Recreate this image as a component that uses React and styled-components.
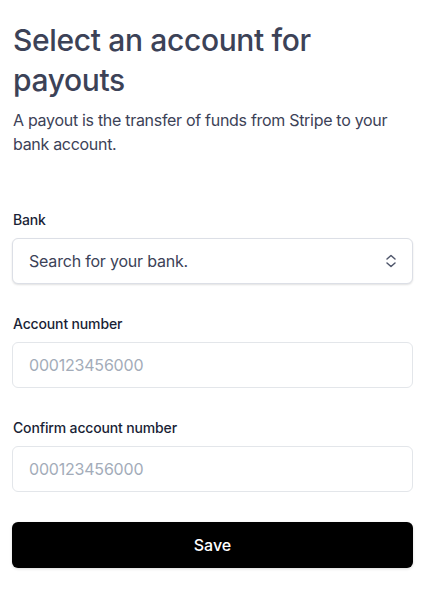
import React from "react";
import styled, { createGlobalStyle } from "styled-components";

const Global = createGlobalStyle`
  html, body { margin: 0; padding: 0; background: #ffffff; }
  body { font-family: Inter, "Noto Sans", sans-serif; -webkit-font-smoothing: antialiased; }
  * { box-sizing: border-box; }
`;

const Page = styled.div`
  padding: 20px 20px 20px 12px;
`;

const Header = styled.header`
  padding-left: 1px;
`;

const Title = styled.h1`
  margin: 0;
  font-size: 30px;
  line-height: 40px;
  font-weight: 500;
  color: #3c4257;
  letter-spacing: -0.35px;
`;

const Lead = styled.p`
  margin: 8px 0 0;
  font-size: 16px;
  line-height: 24px;
  color: #3c4257;
  letter-spacing: -0.3px;
`;

const Form = styled.form`
  margin-top: 54px;
  display: flex;
  flex-direction: column;
  gap: 30px;
`;

const Field = styled.div`
  display: flex;
  flex-direction: column;
  gap: 8px;
`;

const Label = styled.label`
  padding-left: 1px;
  font-size: 14px;
  line-height: 20px;
  font-weight: 500;
  color: #1a1f36;
  letter-spacing: -0.15px;
`;

const SelectBox = styled.div`
  height: 46px;
  display: flex;
  align-items: center;
  justify-content: space-between;
  padding: 0 15px 0 16px;
  border: 1px solid #dcdfe6;
  border-radius: 6px;
  background: #fff;
  box-shadow: 0 1px 2px rgba(0, 0, 0, 0.12);
  font-size: 16px;
  color: #3c4257;
  letter-spacing: -0.2px;
`;

const Input = styled.input`
  height: 46px;
  width: 100%;
  padding: 0 16px;
  border: 1px solid #e3e6ea;
  border-radius: 6px;
  background: #fff;
  font-family: inherit;
  font-size: 16px;
  letter-spacing: -0.2px;
  color: #3c4257;
  outline: none;
  &::placeholder { color: #a3acb9; }
`;

const Button = styled.button`
  height: 46px;
  width: 100%;
  border: none;
  border-radius: 6px;
  background: #000;
  color: #fff;
  font-family: inherit;
  font-size: 16px;
  font-weight: 500;
  box-shadow: 0 1px 3px rgba(0, 0, 0, 0.15);
  cursor: pointer;
`;

const Chevrons = () => (
  <svg width="12" height="16" viewBox="0 0 12 16" fill="none" stroke="#4f566b" strokeWidth="1.5" strokeLinecap="round" strokeLinejoin="round">
    <path d="M2 6 L6 2.5 L10 6" />
    <path d="M2 10 L6 13.5 L10 10" />
  </svg>
);

export default function App() {
  return (
    <>
      <Global />
      <Page>
        <Header>
          <Title>Select an account for payouts</Title>
          <Lead>A payout is the transfer of funds from Stripe to your bank account.</Lead>
        </Header>
        <Form onSubmit={(e) => e.preventDefault()}>
          <Field>
            <Label>Bank</Label>
            <SelectBox>
              <span>Search for your bank.</span>
              <Chevrons />
            </SelectBox>
          </Field>
          <Field>
            <Label>Account number</Label>
            <Input placeholder="000123456000" />
          </Field>
          <Field>
            <Label>Confirm account number</Label>
            <Input placeholder="000123456000" />
          </Field>
          <Button type="submit">Save</Button>
        </Form>
      </Page>
    </>
  );
}
